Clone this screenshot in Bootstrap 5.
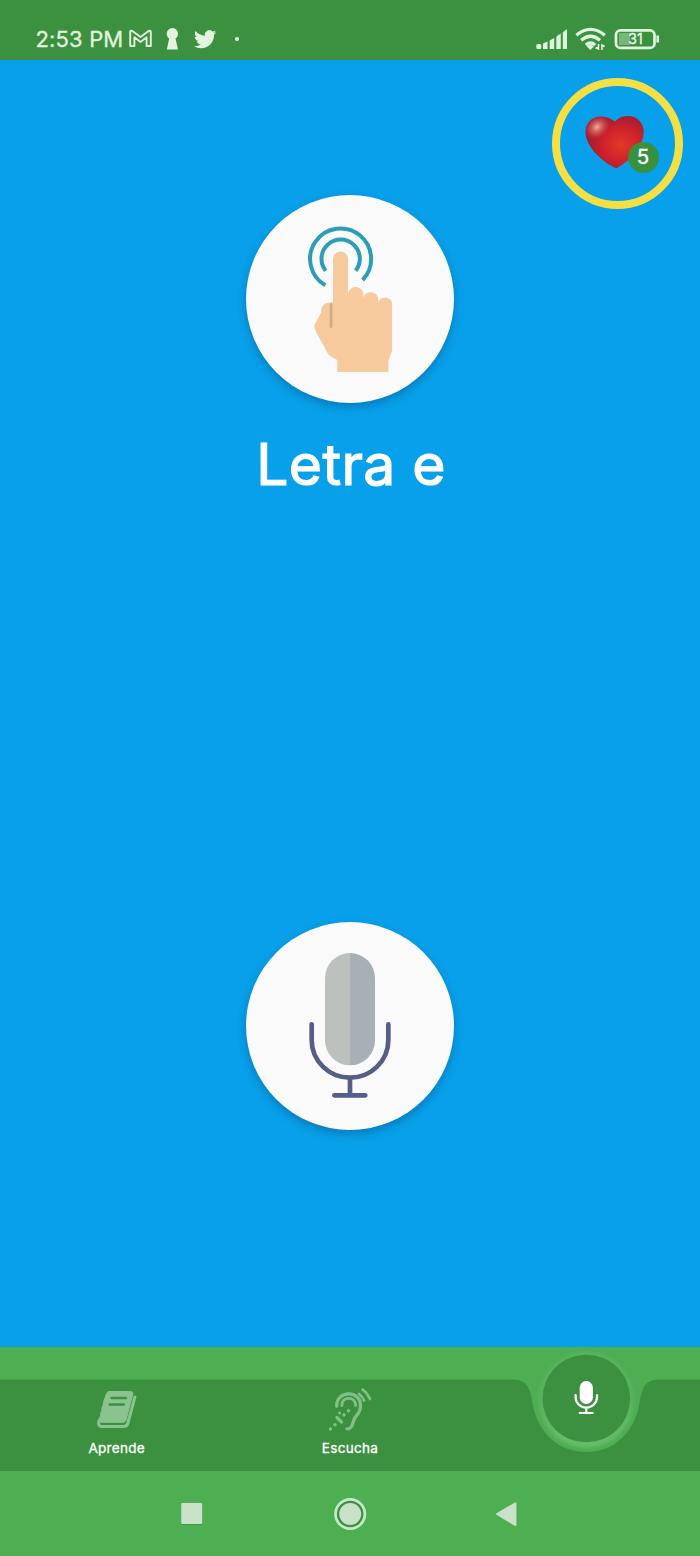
<!DOCTYPE html>
<html lang="es">
<head>
<meta charset="utf-8">
<meta name="viewport" content="width=device-width, initial-scale=1">
<title>Letra e</title>
<link href="https://cdn.jsdelivr.net/npm/bootstrap@5.3.0/dist/css/bootstrap.min.css" rel="stylesheet">
<style>
  body { font-family: Inter, Roboto, "Liberation Sans", sans-serif; background: #08a0ea; height: 1556px; overflow: hidden; }
  svg { display: block; flex: none; }
  .status-bar { height: 60px; background: #3b9140; color: #e3f3df; padding: 18px 40px 0 35.5px; }
  .clock { font-size: 22px; line-height: 42px; letter-spacing: .15px; width: 92.5px; white-space: nowrap; -webkit-text-stroke: .3px #e3f3df; }
  .lesson { height: 1287px; padding-top: 135px; }
  .lives { top: 18px; right: 17px; width: 131px; height: 131px; border: 8px solid #f5e044; }
  .lives-count { width: 31px; height: 31px; left: 67.5px; top: 56px; background: #38913f; font-size: 20.5px; line-height: 30px; -webkit-text-stroke: .3px #fff; }
  .round-btn { width: 208px; height: 208px; background: #fafafa; border: 0; box-shadow: 0 4px 9px rgba(0,40,80,.3); }
  .letter { font-size: 57px; line-height: 70px; font-weight: 400; letter-spacing: .4px; margin-top: 27px; padding-left: 2px; -webkit-text-stroke: 1.2px #fff; }
  .mic-btn { margin-top: 422px; }
  .tab-bar { height: 124px; background: #4eae52; }
  .tabs { padding-top: 40px; }
  .tab-item { width: 233.33px; font-size: 13.5px; line-height: 18px; letter-spacing: .3px; }
  .tab-label { margin-top: 6px; -webkit-text-stroke: .3px #fff; }
  .system-bar { height: 85px; background: #4eae52; padding: 26px 181px 0 180px; }
</style>
</head>
<body>
<header class="status-bar d-flex align-items-start">
  <div class="clock">2:53 PM</div>
  <svg width="120" height="42" viewBox="128 18 120 42">
    <path d="M130.200 46V32q0-1.600 1.800-1.200L140.500 37l8.500-6.200q1.800-.4 1.800 1.200v14h-4.200V37.300l-6.100 4.600-6.100-4.600V46z" fill="none" stroke="#e3f3df" stroke-width="1.900" stroke-linejoin="round"/>
    <path d="M169.200 38.500a5.700 5.700 0 1 1 6.300 0L178 49.600h-11.200z" fill="#e3f3df"/>
    <path transform="translate(194 28) scale(.93)" fill="#e3f3df" d="M23.950 4.570a10 10 0 0 1-2.820.77 4.960 4.960 0 0 0 2.160-2.720c-.95.550-2 .96-3.130 1.180a4.920 4.920 0 0 0-8.380 4.480C7.690 8.090 4.070 6.130 1.640 3.160a4.820 4.820 0 0 0-.67 2.480c0 1.710.87 3.210 2.190 4.100a4.900 4.900 0 0 1-2.230-.62v.06a4.920 4.920 0 0 0 3.950 4.830 5 5 0 0 1-2.210.08 4.940 4.940 0 0 0 4.600 3.420A9.870 9.870 0 0 1 0 19.540a13.990 13.990 0 0 0 7.550 2.210c9.050 0 14-7.500 14-13.980 0-.21 0-.42-.02-.63a9.900 9.900 0 0 0 2.420-2.570z"/>
    <circle cx="237" cy="39" r="2" fill="#e3f3df"/>
  </svg>
  <svg class="ms-auto" width="126" height="42" viewBox="534 18 126 42">
    <g fill="#dcf3dc">
      <rect x="536.300" y="44" width="5" height="5" rx="1.500"/>
      <path d="M543 43.500l4.500-2V49H543zM549.700 40.500l4.500-2.500v11h-4.500zM556.300 36.500l4.500-3v15.500h-4.500zM562.800 32.500l3.200-3q1-.3 1 .8V49h-4.200z"/>
    </g>
    <g fill="none" stroke="#e0f5df" stroke-width="3.300">
      <path d="M576.400 35.300q14.200-11.800 28.400 0M581.200 40.300q9.400-8 18.800 0M585.800 45q4.700-4 9.300 0"/>
    </g>
    <path d="M586.800 46.500a5 5 0 0 1 7 0L590.300 50z" fill="#e0f5df"/>
    <path d="M598.500 44v6M602 50v-6" stroke="#e0f5df" stroke-width="1.600"/>
    <path d="M595.500 48h3M602 46h2.600" stroke="#e0f5df" stroke-width="1.800"/>
    <rect x="619" y="33" width="11" height="12" fill="#78b779"/>
    <rect x="616" y="30.300" width="38.500" height="17.600" rx="4.500" fill="none" stroke="#e0f5df" stroke-width="2.700"/>
    <path d="M657.700 36.500v5" stroke="#e0f5df" stroke-width="2.600" stroke-linecap="round"/>
    <text x="635.500" y="44.200" text-anchor="middle" font-size="14" fill="#ecf8ea" stroke="#ecf8ea" stroke-width=".3">31</text>
  </svg>
</header>

<main class="lesson position-relative d-flex flex-column align-items-center">
  <div class="lives position-absolute rounded-circle">
    <svg width="115" height="115" viewBox="560 86 115 115">
      <defs>
        <radialGradient id="heartRed" cx=".62" cy=".55" r=".62">
          <stop offset="0" stop-color="#e03a25"/><stop offset=".5" stop-color="#cf222b"/><stop offset="1" stop-color="#9c1b35"/>
        </radialGradient>
        <radialGradient id="heartShine">
          <stop offset="0" stop-color="#f5b5a0" stop-opacity=".95"/><stop offset="1" stop-color="#e0514b" stop-opacity="0"/>
        </radialGradient>
      </defs>
      <path d="M614.500 167.500C605 163 585 148 585.500 131c.3-9.500 8.500-15 15.500-14.600 6.500.2 11 2.600 14 5.100 3-3.500 8.500-6 14-5.500 8.500.6 15 7 14.700 16.500-.5 15-16 30-26.200 35.200q-1.600.7-3-.2z" fill="url(#heartRed)"/>
      <ellipse cx="597" cy="127" rx="14" ry="11" fill="url(#heartShine)" transform="rotate(-40 597 127)"/>
    </svg>
    <div class="lives-count position-absolute rounded-circle text-white text-center">5</div>
  </div>

  <button type="button" class="round-btn rounded-circle p-0" aria-label="Tocar">
    <svg width="208" height="208" viewBox="48 44 624 624">
      <g fill="none" stroke="#2b9db8" stroke-width="12">
        <path d="M287 315A91.500 91.500 0 1 1 399 299" transform="translate(-1 0)"/>
        <path d="M287 271A57.500 57.500 0 1 1 377 271"/>
      </g>
      <path fill="#f6ca9c" d="M309 236a22.500 22.500 0 0 1 45 0V343A23 23 0 0 1 400 343V358A22.500 22.500 0 0 1 445 358V367A21 19 0 0 1 486 367V512L475 543V575H322V539C310 533 297 527 291 515L257 453C251 441 252 434 259 424L273 397C273 375 285 365 309 366z"/>
      <path d="M303 369v73" stroke="#d3a982" stroke-width="8"/>
    </svg>
  </button>
  <h1 class="letter text-white mb-0">Letra e</h1>

  <button type="button" class="round-btn mic-btn rounded-circle p-0" aria-label="Hablar">
    <svg width="208" height="208" viewBox="48 50 624 624">
      <path d="M360 143a75 75 0 0 0-75 75v187a75 75 0 0 0 75 75z" fill="#bdc1bd"/>
      <path d="M360 143a75 75 0 0 1 75 75v187a75 75 0 0 1-75 75z" fill="#a6b0b5"/>
      <path d="M245 357v47a115 113 0 0 0 230 0v-47M360 517v53M313 570h93" fill="none" stroke="#535f87" stroke-width="14" stroke-linecap="round"/>
    </svg>
  </button>
</main>

<nav class="tab-bar position-relative">
  <svg class="position-absolute top-0 start-0" width="700" height="124" viewBox="0 1347 700 124">
    <defs>
      <linearGradient id="halo" x1="0" y1="0" x2="0" y2="1">
        <stop offset="0" stop-color="#57b35b"/><stop offset=".5" stop-color="#57b35b"/><stop offset="1" stop-color="#68bc6b"/>
      </linearGradient>
      <filter id="soft" x="-20%" y="-20%" width="140%" height="140%"><feGaussianBlur stdDeviation="1.500"/></filter>
    </defs>
    <path fill="#3b9140" d="M0 1379.500H514C526 1379.500 530 1388 532 1400C536 1431 557 1452 586.300 1452S636 1431 640 1400C642 1388 646 1379.500 658 1379.500H700V1471H0z"/>
    <circle cx="586.300" cy="1399.500" r="48" fill="url(#halo)" filter="url(#soft)"/>
    <circle cx="586.300" cy="1398.500" r="43.800" fill="#3b9140"/>
    <rect x="579.700" y="1381" width="13.200" height="23" rx="6.600" fill="#fff"/>
    <path d="M575.600 1395v2a10.700 10.700 0 0 0 21.400 0v-2M586.300 1408v5M579.800 1413h13" fill="none" stroke="#fff" stroke-width="2.200" stroke-linecap="round"/>
  </svg>
  <div class="tabs position-relative d-flex text-white text-center">
    <div class="tab-item d-flex flex-column align-items-center">
      <svg width="46" height="46" viewBox="94 1387 46 46">
        <path d="M108 1391.500h22.500q3 0 2.300 2.800l-6.800 25.700q-.7 2.300-3 2.300H99.500q-1.500 0-1-2.200l2-4.500q-.5-1.500.5-3l1-3q-.5-1.500.5-3l1.200-3.500q-.5-1.500.6-3l1.700-5q.5-2.600 2-2.600z" fill="#8ac38d" stroke="#8ac38d" stroke-linejoin="round"/>
        <path d="M111.500 1398h14.500M109.500 1404.500h14.500" stroke="#3b9140" stroke-width="2.300" stroke-linecap="round"/>
        <path d="M98.600 1421.500q-.5 5 3 5h22q3.300 0 4.300-3.500l7-26" fill="none" stroke="#8ac38d" stroke-width="3" stroke-linecap="round" stroke-linejoin="round"/>
      </svg>
      <div class="tab-label">Aprende</div>
    </div>
    <div class="tab-item d-flex flex-column align-items-center">
      <svg width="46" height="46" viewBox="327 1387 46 46">
        <g fill="none" stroke="#83c086" stroke-width="3.300" stroke-linecap="round">
          <path d="M336.700 1406C336.500 1390 360.500 1390 360.500 1405.500C360.500 1415.500 355 1414 353.200 1422Q351.500 1429.500 347 1428.800"/>
          <path d="M341.800 1405.500c0-9.500 13.800-9.500 13.800 0" stroke-width="2.800"/>
          <path d="M359 1394q3.500 2.500 5 6.500M362.500 1389.500q5 3.500 7.500 9.500" stroke-width="2.700"/>
          <path d="M337 1417.500l4.500 4.500"/>
        </g>
        <g fill="#83c086"><circle cx="330.500" cy="1429" r="1.700"/><circle cx="335" cy="1424.700" r="1.700"/><circle cx="339.500" cy="1413" r="1.500"/><circle cx="344" cy="1415" r="1.700"/><circle cx="348.500" cy="1410.700" r="1.700"/></g>
      </svg>
      <div class="tab-label">Escucha</div>
    </div>
  </div>
</nav>

<footer class="system-bar d-flex justify-content-between">
  <svg width="24" height="34" viewBox="180 1497 24 34"><rect x="181.200" y="1503.500" width="21" height="21.500" rx="1" fill="#348c3a" opacity=".6"/><rect x="181.200" y="1503" width="21" height="21" rx="1" fill="#c9e1c9"/></svg>
  <svg width="34" height="34" viewBox="333 1497 34 34"><circle cx="350.200" cy="1514" r="13" fill="#3f8d42"/><circle cx="350.200" cy="1514" r="14.700" fill="none" stroke="#c9e8ca" stroke-width="2.700"/><circle cx="350.200" cy="1514" r="11" fill="#c9e1c9"/></svg>
  <svg width="24" height="34" viewBox="495 1497 24 34"><path d="M497 1514l18.500-10.800v22z" fill="#c9e1c9" stroke="#c9e1c9" stroke-width="1.800" stroke-linejoin="round"/></svg>
</footer>
<script src="https://cdn.jsdelivr.net/npm/bootstrap@5.3.0/dist/js/bootstrap.bundle.min.js"></script>
</body>
</html>
